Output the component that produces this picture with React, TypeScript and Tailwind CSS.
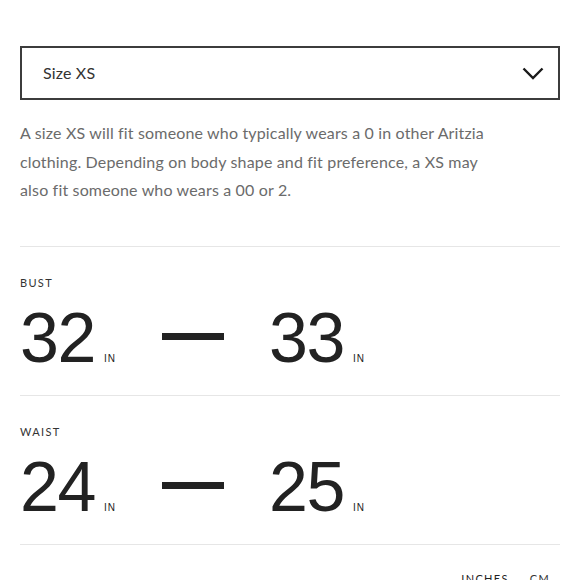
import { useState } from "react"

const measurements = [
  { label: "BUST", from: "32", to: "33" },
  { label: "WAIST", from: "24", to: "25" },
]

function Chevron() {
  return (
    <svg width="22" height="13" viewBox="0 0 22 13" fill="none">
      <path d="M1.5 1.5 L11 11 L20.5 1.5" stroke="#1a1a1a" strokeWidth="2.4" />
    </svg>
  )
}

function Measurement({ label, from, to }: { label: string; from: string; to: string }) {
  return (
    <div className="border-t border-[#e6e6e6] pt-[30px] pb-[28px]">
      <div className="text-[11px] leading-none tracking-[0.12em] text-[#333]">{label}</div>
      <div className="mt-[21px] flex items-baseline font-['Liberation_Sans',sans-serif] text-[#222]">
        <div className="flex w-[142px] items-baseline">
          <span className="text-[70px] leading-[58px] tracking-[-0.02em]">{from}</span>
          <span className="ml-[9px] text-[10px] tracking-[0.08em]">IN</span>
        </div>
        <div className="mb-[27px] h-[7px] w-[62px] self-end bg-[#222]" />
        <div className="ml-[45px] flex items-baseline">
          <span className="text-[70px] leading-[58px] tracking-[-0.02em]">{to}</span>
          <span className="ml-[9px] text-[10px] tracking-[0.08em]">IN</span>
        </div>
      </div>
    </div>
  )
}

export default function App() {
  const [unit, setUnit] = useState("in")
  return (
    <div className="h-[580px] w-[580px] overflow-hidden bg-white px-5 pt-[46px] font-['Lato','Liberation_Sans',sans-serif]">
      <div className="flex h-[54px] items-center justify-between border-2 border-[#3c3c3c] pl-[21px] pr-[14px]">
        <span className="text-[16px] tracking-[0.01em] text-[#333]">Size XS</span>
        <Chevron />
      </div>
      <p className="mt-[19px] mb-[41px] pr-[70px] text-[16px] leading-[28.5px] tracking-[0.01em] text-[#6b6b6b]">
        A size XS will fit someone who typically wears a 0 in other Aritzia clothing. Depending on body shape and fit
        preference, a XS may also fit someone who wears a 00 or 2.
      </p>
      {measurements.map((m) => (
        <Measurement key={m.label} {...m} />
      ))}
      <div className="flex justify-end gap-[21px] border-t border-[#e6e6e6] pt-[28px] pr-[10px] text-[11px] leading-none tracking-[0.12em] text-[#333]">
        <button className={unit === "in" ? "text-[#222]" : ""} onClick={() => setUnit("in")}>
          INCHES
        </button>
        <button onClick={() => setUnit("cm")}>CM</button>
      </div>
    </div>
  )
}
